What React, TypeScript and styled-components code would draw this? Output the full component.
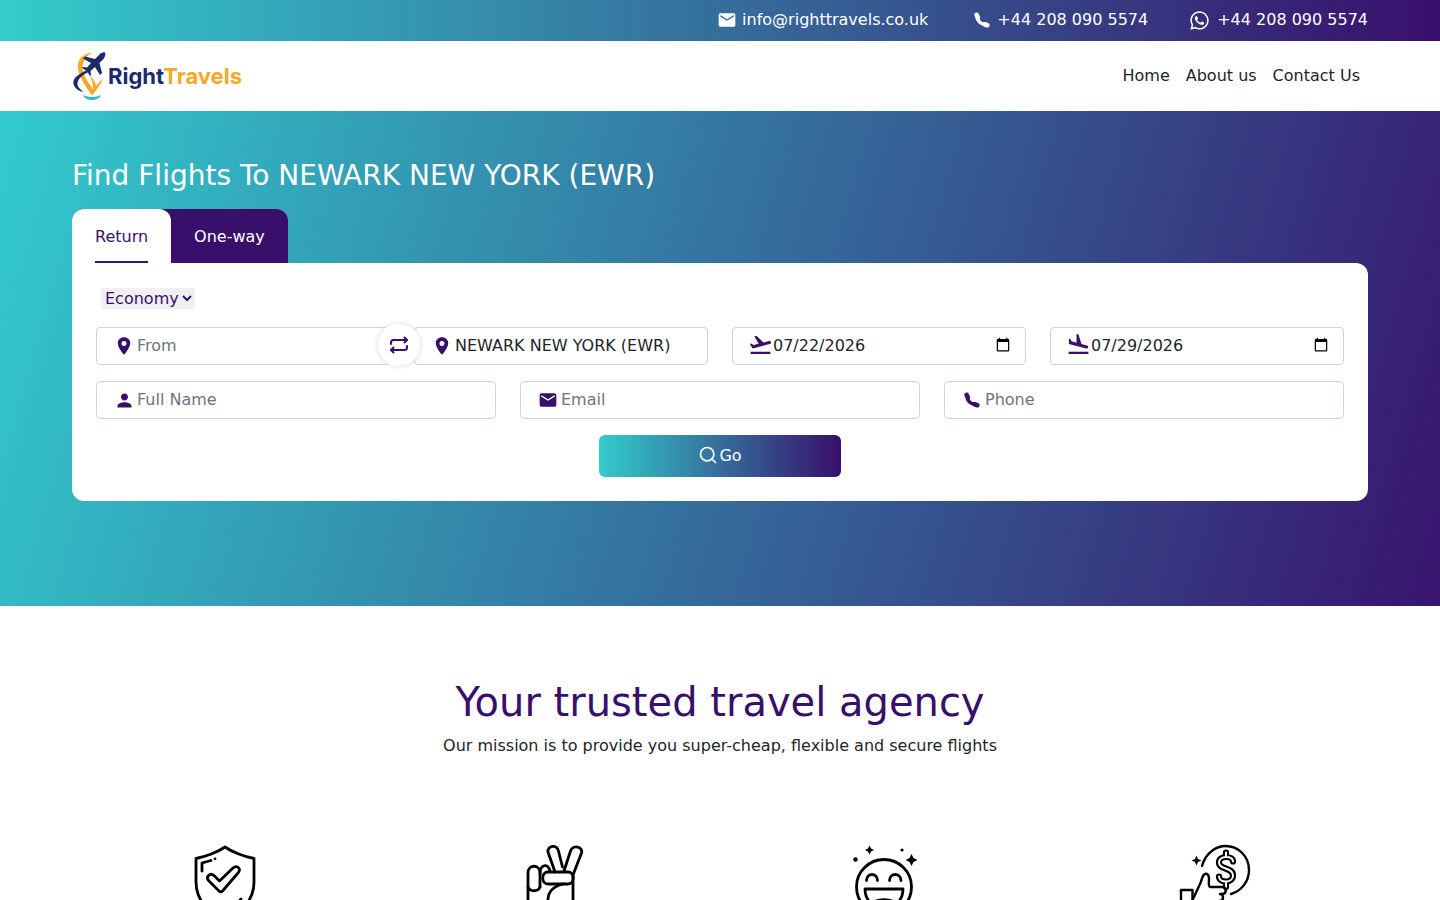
import styled, { createGlobalStyle } from "styled-components"
import { FaWhatsapp } from "react-icons/fa"
import { IoLocationSharp } from "react-icons/io5"
import { MdEmail, MdFlightLand, MdFlightTakeoff, MdPerson } from "react-icons/md"
import { Search } from "lucide-react"

const purple = "#380f6b"
const brand = "linear-gradient(90deg, #33cccc 0%, #380f6b 100%)"

export default function App() {
    return (
        <>
            <GlobalStyle />
            <TopBar>
                <TopItem $gap={5} $left={0}><MdEmail size={20} />info@righttravels.co.uk</TopItem>
                <TopItem $gap={7} $left={46}><PhoneIcon />+44 208 090 5574</TopItem>
                <TopItem $gap={7} $left={41}><WhatsappMark size={21} />+44 208 090 5574</TopItem>
            </TopBar>

            <Nav>
                <Logo>
                    <LogoMark />
                    <LogoText>Right<em>Travels</em></LogoText>
                </Logo>
                <NavLinks>
                    <a href="#home">Home</a>
                    <a href="#about">About us</a>
                    <a href="#contact">Contact Us</a>
                </NavLinks>
            </Nav>

            <Hero>
                <HeroTitle>Find Flights To NEWARK NEW YORK (EWR)</HeroTitle>
                <Tabs>
                    <Tab $active><span>Return</span></Tab>
                    <Tab><span>One-way</span></Tab>
                </Tabs>
                <SearchCard>
                    <CabinSelect defaultValue="Economy">
                        <option>Economy</option>
                        <option>Business</option>
                        <option>First</option>
                    </CabinSelect>
                    <FourCols>
                        <Field>
                            <IconSlot><IoLocationSharp size={20} /></IconSlot>
                            <input placeholder="From" />
                            <SwapButton aria-label="Swap"><SwapIcon /></SwapButton>
                        </Field>
                        <Field>
                            <IconSlot><IoLocationSharp size={20} /></IconSlot>
                            <input defaultValue="NEWARK NEW YORK (EWR)" />
                        </Field>
                        <Field>
                            <IconSlot $lift={4}><MdFlightTakeoff size={25} /></IconSlot>
                            <input type="date" defaultValue="2026-07-22" />
                        </Field>
                        <Field>
                            <IconSlot $lift={4}><MdFlightLand size={25} /></IconSlot>
                            <input type="date" defaultValue="2026-07-29" />
                        </Field>
                    </FourCols>
                    <ThreeCols>
                        <Field>
                            <IconSlot><MdPerson size={21} /></IconSlot>
                            <input placeholder="Full Name" />
                        </Field>
                        <Field>
                            <IconSlot><MdEmail size={20} /></IconSlot>
                            <input placeholder="Email" />
                        </Field>
                        <Field>
                            <IconSlot><PhoneIcon /></IconSlot>
                            <input placeholder="Phone" />
                        </Field>
                    </ThreeCols>
                    <GoButton><Search size={20} strokeWidth={2} />Go</GoButton>
                </SearchCard>
            </Hero>

            <Agency>
                <h2>Your trusted travel agency</h2>
                <p>Our mission is to provide you super-cheap, flexible and secure flights</p>
            </Agency>

            <Features>
                <Feature><ShieldIcon /></Feature>
                <Feature><PeaceIcon /></Feature>
                <Feature><SmileIcon /></Feature>
                <Feature><ThumbIcon /></Feature>
            </Features>
        </>
    )
}

const WhatsappMark = styled(FaWhatsapp)`
    position: relative;
    top: 1px;
`

function PhoneIcon() {
    return (
        <svg width="16" height="16" viewBox="0 0 16 16" fill="none" stroke="currentColor" strokeLinecap="round">
            <path d="M3 3.500C3 8.500 6.500 12 12.500 13" strokeWidth="3.400" />
            <path d="M2.600 2.800L3.800 5.500" strokeWidth="4.600" />
            <path d="M10.500 12.300L13.300 13.200" strokeWidth="4.600" />
        </svg>
    )
}

function LogoMark() {
    return (
        <svg width="36" height="50" viewBox="0 0 36 50" fill="none">
            <path d="M20 1.500C10 3 5 9 6 17C7 27 15 37 20 44.500C24 40 29 33 31.500 27C28 31 24 34 21 38C17 32 10 24 10.500 16C11 9 15 5 20 1.500Z" fill="#f9a826" />
            <path d="M18 25C20 29 21 33 21 38L24 34.500C23 31 21 27 18 25Z" fill="#f9a826" />
            <path d="M17 18C9 22 0 26 1.500 33C2.500 37 6 40 11.500 41C8 38 5 35.500 5.500 32C6 27 12 23 18.500 20Z" fill="#1c2a6b" />
            <path d="M33 1.500C31 1 29 2 27 4L23 8L13 5.500L11 7.500L19 12L15 16.500L11 16L10 17L15 20L18 25L19 24L18.500 20L23 16L28 24L30 22L27.500 12L31.500 8C33 6 34 3 33 1.500Z" fill="#1c2a6b" />
            <path d="M11.500 44C11.500 47.500 16 49 20 49C24 49 28.500 47.500 28.500 44C25 46.500 15 46.500 11.500 44Z" fill="#33bcc8" />
        </svg>
    )
}

function SwapIcon() {
    return (
        <svg width="20" height="20" viewBox="0 0 20 20" fill="none" stroke={purple} strokeWidth="2" strokeLinecap="round" strokeLinejoin="round">
            <path d="M2 9V7.500C2 6 3 5 4.500 5H18" />
            <path d="M15.500 2.500L18 5L15.500 7.500" />
            <path d="M18 11V12.500C18 14 17 15 15.500 15H2" />
            <path d="M4.500 12.500L2 15L4.500 17.500" />
        </svg>
    )
}

function ShieldIcon() {
    return (
        <svg width="80" height="80" viewBox="0 0 80 80" fill="none" stroke="#000" strokeWidth="2.800" strokeLinecap="round" strokeLinejoin="round">
            <path d="M40 3C33 8 20 13 11 14.500V38C11 56 24 70 40 78C56 70 69 56 69 38V14.500C60 13 47 8 40 3Z" />
            <path d="M17 27V19L26 16.500" />
            <path d="M30 14.800V14.800" />
            <path d="M34 47L24 37C20 33 25 28 29 31.500L34.500 37L48 24C52 20.500 57 25 53 29L37.500 47C36.500 48 35 48 34 47Z" />
            <path d="M51 61L56 55" />
        </svg>
    )
}

function PeaceIcon() {
    return (
        <svg width="80" height="80" viewBox="0 0 80 80" fill="none" stroke="#000" strokeWidth="2.800" strokeLinecap="round" strokeLinejoin="round">
            <path d="M47.500 23L43.500 7C42 0 32 1.500 33 8L40 28" />
            <path d="M49 27L55.500 7C58 0 68.500 3 66.500 9L58 31V60C58 68 52 76 40 76C24 76 13 70 13 56V29C13 20 25 20 25 29V43" />
            <path d="M25 30C25 20 33 19 35 27" />
            <path d="M33 28H53C60 28 60 40 53 40H33C26 40 26 28 33 28Z" />
            <path d="M48 40C40 42 33 47 33 56V62" />
            <path d="M13 43C15 48 23 48 25 43" />
        </svg>
    )
}

function SmileIcon() {
    return (
        <svg width="80" height="80" viewBox="0 0 80 80" fill="none" stroke="#000" strokeWidth="2.800" strokeLinecap="round" strokeLinejoin="round">
            <circle cx="39" cy="43" r="27.500" />
            <path d="M21.500 36.500C21.500 28.500 32.500 28.500 32.500 36.500" />
            <path d="M44.500 36.500C44.500 28.500 56 28.500 56 36.500" />
            <path d="M20 45H58C58 57 50 63 39 63C28 63 20 57 20 45Z" />
            <path d="M27 61C30 54 48 54 51 61" />
            <g fill="#000" stroke="none">
                <path d="M24.500 1.500L26 4.500L29 6L26 7.500L24.500 10.500L23 7.500L20 6L23 4.500Z" />
                <path d="M66.500 10L68.500 14L72.500 16L68.500 18L66.500 22L64.500 18L60.500 16L64.500 14Z" />
                <circle cx="10.500" cy="15.500" r="2.200" />
                <circle cx="57" cy="6" r="1.600" />
            </g>
        </svg>
    )
}

function ThumbIcon() {
    const dollar = "M58 17.500C58 14.500 55 13 51 13C47 13 44 15 44 18.500C44 26 58 23 58 31.500C58 35 55 37.500 51 37.500C47 37.500 44 35.500 44 32.500M51 8.500V13M51 37.500V43"
    return (
        <svg width="80" height="80" viewBox="0 0 80 80" fill="none" stroke="#000" strokeWidth="2.400" strokeLinecap="round" strokeLinejoin="round">
            <path d="M27 22C31 8 42 2 50.500 2C63 2 74 12 74 26C74 38 66 47 56 50" />
            <path d={dollar} strokeWidth="6.200" />
            <path d={dollar} strokeWidth="2" stroke="#fff" />
            <path d="M17.500 56L25 40C27 36 27 31 30 30C33 29 34 32 34 35C34 39 33 42 35 43H47C52 43 52 50 47 50H45C49 50 49 57 45 57H44C48 57 48 64 44 64H42C45 64 45 71 41 71H24L17.500 68" />
            <path d="M6 46H17.500V76H6Z" />
            <path d="M21.500 11.500L23 15L26.500 16.500L23 18L21.500 21.500L20 18L16.500 16.500L20 15Z" fill="#000" stroke="none" />
        </svg>
    )
}

const GlobalStyle = createGlobalStyle`
    * {
        box-sizing: border-box;
    }

    body {
        margin: 0;
        background: #fff;
        color: #212529;
        font-family: "DejaVu Sans", sans-serif;
        font-size: 16px;
        line-height: 1.5;
    }
`

const TopBar = styled.div`
    display: flex;
    justify-content: flex-end;
    align-items: center;
    height: 41px;
    padding: 0 72px 2px;
    background: ${brand};
    color: #fff;
`

const TopItem = styled.div<{ $gap: number; $left: number }>`
    display: flex;
    align-items: center;
    gap: ${(p) => p.$gap}px;
    margin-left: ${(p) => p.$left}px;
`

const Nav = styled.nav`
    display: flex;
    justify-content: space-between;
    align-items: center;
    height: 70px;
    padding: 0 72px;
    background: #fff;
`

const Logo = styled.div`
    display: flex;
    align-items: center;
`

const LogoText = styled.span`
    font-family: "Inter", sans-serif;
    font-size: 22px;
    font-weight: 700;
    color: #1c2a6b;

    em {
        font-style: normal;
        color: #f9a826;
    }
`

const NavLinks = styled.div`
    display: flex;

    a {
        padding: 8px;
        color: #212529;
        text-decoration: none;
    }
`

const Hero = styled.section`
    height: 495px;
    padding: 43px 72px 0;
    background: linear-gradient(106deg, #32cbcd 0%, #380f6b 103%);
`

const HeroTitle = styled.h1`
    margin: 0 0 11px;
    font-size: 28px;
    font-weight: 400;
    line-height: 44px;
    color: #fff;
`

const Tabs = styled.div`
    display: flex;
    width: max-content;
    background: ${purple};
    border-radius: 12px 12px 0 0;
`

const Tab = styled.div<{ $active?: boolean }>`
    height: 54px;
    padding: 0 23px;
    background: ${(p) => (p.$active ? "#fff" : "transparent")};
    color: ${(p) => (p.$active ? purple : "#fff")};
    border-radius: 12px 12px 0 0;

    span {
        display: block;
        height: 100%;
        padding-top: 16px;
        border-bottom: ${(p) => (p.$active ? `2px solid ${purple}` : "none")};
    }
`

const SearchCard = styled.div`
    display: flex;
    flex-direction: column;
    height: 238px;
    padding: 25px 24px 0;
    background: #fff;
    border-radius: 0 12px 12px 12px;
`

const CabinSelect = styled.select`
    align-self: flex-start;
    height: 21px;
    margin: 0 0 18px 5px;
    padding: 0;
    border: none;
    background: #f0eff2;
    color: ${purple};
    font-family: inherit;
    font-size: 16px;
`

const FourCols = styled.div`
    display: grid;
    grid-template-columns: repeat(4, 1fr);
    gap: 24px;
    margin-bottom: 16px;
`

const ThreeCols = styled.div`
    display: grid;
    grid-template-columns: repeat(3, 1fr);
    gap: 24px;
    margin-bottom: 16px;
`

const Field = styled.label`
    position: relative;
    display: flex;
    align-items: center;
    height: 38px;
    padding: 0 12px 0 17px;
    border: 1px solid #ced4da;
    border-radius: 4px;
    background: #fff;

    input {
        flex: 1;
        min-width: 0;
        margin-left: 3px;
        padding: 0 0 2px;
        border: none;
        outline: none;
        background: transparent;
        color: #212529;
        font-family: inherit;
        font-size: 16px;
    }

    input::placeholder {
        color: #6c757d;
    }

    input::-webkit-datetime-edit,
    input::-webkit-datetime-edit-fields-wrapper,
    input::-webkit-datetime-edit-month-field,
    input::-webkit-datetime-edit-day-field,
    input::-webkit-datetime-edit-year-field {
        padding: 0;
    }
`

const IconSlot = styled.span<{ $lift?: number }>`
    flex: 0 0 20px;
    display: flex;
    align-items: center;
    justify-content: center;
    min-width: 0;
    height: 20px;
    margin-bottom: ${(p) => p.$lift ?? 0}px;
    color: ${purple};

    svg {
        flex: none;
    }
`

const SwapButton = styled.button`
    position: absolute;
    top: -5px;
    right: -32px;
    z-index: 1;
    display: flex;
    align-items: center;
    justify-content: center;
    width: 44px;
    height: 44px;
    padding: 0;
    border: 1px solid #f0f0f0;
    border-radius: 50%;
    background: #fff;
    box-shadow: 0 0 4px rgba(0, 0, 0, 0.12);
`

const GoButton = styled.button`
    align-self: center;
    display: flex;
    align-items: center;
    justify-content: center;
    gap: 1px;
    width: 242px;
    height: 42px;
    padding: 0 0 2px;
    border: none;
    border-radius: 6px;
    background: ${brand};
    color: #fff;
    font-family: inherit;
    font-size: 16px;
`

const Agency = styled.section`
    padding-top: 69px;
    text-align: center;

    h2 {
        margin: 0;
        color: ${purple};
        font-size: 40px;
        font-weight: 400;
        line-height: 54px;
    }

    p {
        margin: 5px 0 0;
    }
`

const Features = styled.div`
    display: grid;
    grid-template-columns: repeat(4, 330px);
    justify-content: center;
    margin-top: 86px;
    padding-bottom: 40px;
`

const Feature = styled.div`
    display: flex;
    justify-content: center;
`
